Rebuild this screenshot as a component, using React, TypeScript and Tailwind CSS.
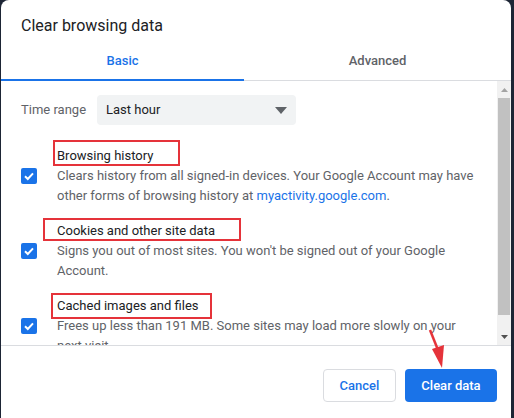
import React from "react";

const font = { fontFamily: "Roboto, 'Noto Sans', Arial, sans-serif" };

function Check() {
  return (
    <div className="w-[16px] h-[16px] rounded-[2px] bg-[#1a73e8] flex items-center justify-center shrink-0">
      <svg width="12" height="12" viewBox="0 0 12 12">
        <path d="M2 6.2 L4.8 9 L10 3.4" stroke="white" strokeWidth="2" fill="none" />
      </svg>
    </div>
  );
}

function Item({
  label,
  lines,
  box,
}: {
  label: string;
  lines: React.ReactNode[];
  box: string;
}) {
  return (
    <div className="flex items-center">
      <div className="w-[36px] flex justify-start">
        <Check />
      </div>
      <div className="relative">
        <div className="text-[13px] leading-[20px] text-[#202124]">{label}</div>
        {lines.map((l, i) => (
          <div key={i} className="text-[13px] leading-[20px] text-[#5f6368] whitespace-nowrap">
            {l}
          </div>
        ))}
        <div className={"absolute border-2 border-[#e5333a] " + box} />
      </div>
    </div>
  );
}

export default function App() {
  return (
    <div className="w-[514px] h-[418px] bg-[#1d2535] flex" style={font}>
      <div className="ml-[1px] mr-[3px] flex-1 bg-white rounded-t-[8px] flex flex-col relative overflow-hidden">
        <div className="pt-[14px] pl-[20px] text-[16px] leading-[24px] text-[#202124]">
          Clear browsing data
        </div>
        <div className="flex mt-[4px] h-[39px] border-b border-[#dadce0]">
          <div className="w-[243px] flex items-center justify-center text-[13px] font-medium text-[#1a73e8] border-b-2 border-[#1a73e8] -mb-[1px]">
            Basic
          </div>
          <div className="flex-1 flex items-center justify-center text-[13px] font-medium text-[#5f6368]">
            Advanced
          </div>
        </div>
        <div className="flex h-[265px] border-b border-[#dadce0]">
          <div className="flex-1 overflow-hidden pl-[20px] pt-[14px]">
            <div className="flex items-center">
              <div className="w-[76px] text-[13px] text-[#5f6368]">Time range</div>
              <div className="w-[199px] h-[30px] bg-[#f1f3f4] rounded-[4px] flex items-center justify-between pl-[9px] pr-[9px] text-[13px] text-[#202124]">
                <span>Last hour</span>
                <svg width="12" height="7" viewBox="0 0 12 7">
                  <path d="M0 0 H12 L6 7 Z" fill="#5f6368" />
                </svg>
              </div>
            </div>
            <div className="mt-[21px] flex flex-col gap-[15px]">
              <Item
                label="Browsing history"
                lines={[
                  "Clears history from all signed-in devices. Your Google Account may have",
                  <span>
                    other forms of browsing history at{" "}
                    <span className="text-[#1a73e8]">myactivity.google.com</span>.
                  </span>,
                ]}
                box="left-[-4px] top-[-6px] w-[127px] h-[26px]"
              />
              <Item
                label="Cookies and other site data"
                lines={[
                  "Signs you out of most sites. You won't be signed out of your Google",
                  "Account.",
                ]}
                box="left-[-14px] top-[-3px] w-[198px] h-[23px]"
              />
              <Item
                label="Cached images and files"
                lines={[
                  "Frees up less than 191 MB. Some sites may load more slowly on your",
                  "next visit.",
                ]}
                box="left-[-6px] top-[-3px] w-[161px] h-[26px]"
              />
            </div>
          </div>
          <div className="w-[14px] bg-[#f1f1f1] flex flex-col items-center">
            <div className="h-[17px] flex items-center justify-center">
              <svg width="7" height="4" viewBox="0 0 7 4">
                <path d="M0 4 L3.5 0 L7 4 Z" fill="#a3a3a3" />
              </svg>
            </div>
            <div className="w-[12px] h-[217px] bg-[#c1c1c1]" />
            <div className="flex-1" />
            <div className="h-[17px] flex items-center justify-center">
              <svg width="7" height="4" viewBox="0 0 7 4">
                <path d="M0 0 L7 0 L3.5 4 Z" fill="#505050" />
              </svg>
            </div>
          </div>
        </div>
        <div className="flex justify-end gap-[9px] pt-[23px] pr-[14px]">
          <button className="w-[73px] h-[33px] rounded-[4px] border border-[#dadce0] bg-white text-[13px] font-medium text-[#1a73e8]">
            Cancel
          </button>
          <button className="w-[92px] h-[33px] rounded-[4px] bg-[#1a73e8] text-[13px] font-medium text-white">
            Clear data
          </button>
        </div>
        <svg
          className="absolute left-[0px] top-[0px] pointer-events-none"
          width="514"
          height="418"
          viewBox="0 0 514 418"
        >
          <path d="M429 330 L437 350" stroke="#e5333a" strokeWidth="2.5" fill="none" />
          <path d="M431 349 L441 368 L443 345 Z" fill="#e5333a" />
        </svg>
      </div>
    </div>
  );
}
